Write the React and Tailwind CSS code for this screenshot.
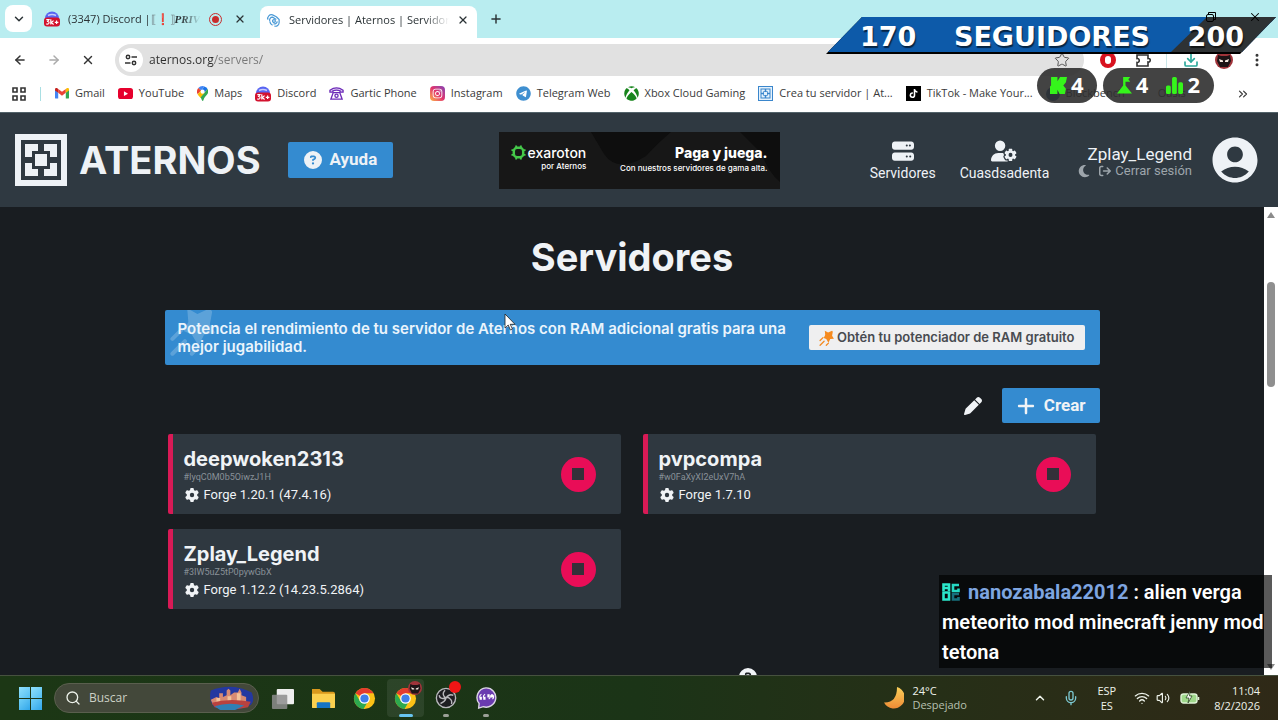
import React from 'react';
import {
    FaArrowRightFromBracket,
    FaCircleQuestion,
    FaGear,
    FaInstagram,
    FaMoon,
    FaPen,
    FaPlus,
    FaServer,
    FaTelegram,
    FaTiktok,
    FaUserGear,
    FaXbox,
} from 'react-icons/fa6';
import { MdAccountCircle } from 'react-icons/md';
import { ArrowLeft, ArrowRight, ChevronDown, ChevronUp, ChevronsRight, Download, EllipsisVertical, Mic, Plus, Search, Star, Volume2, Wifi, X } from 'lucide-react';

/* ---------- small drawings ---------- */

const DiscordBadge = () => (
    <svg viewBox="0 0 16 16" className="size-4 shrink-0">
        <circle cx="8" cy="7.5" r="7" fill="#5865f2" />
        <path d="M4 4.5q4-2 8 0" stroke="#c9cdfb" strokeWidth="1.4" fill="none" />
        <rect x="0" y="6.5" width="16" height="9" rx="3" fill="#d3122e" />
        <path d="M2.3 8.6h2.6L3.7 10.4q1.6.1 1.3 1.7-.5 1.4-2.7.8M6.8 8.3v5.2M9.6 9.6 7.2 11.5l2.4 2M10.8 11.3h3.6M12.6 9.5v3.6" stroke="#fff" strokeWidth="1.2" fill="none" />
    </svg>
);

const GmailIcon = () => (
    <svg viewBox="0 0 24 18" className="w-3.5 shrink-0">
        <path d="M0 2v14.5A1.5 1.5 0 0 0 1.500 18H5.500V8.300z" fill="#4285f4" />
        <path d="M24 2v14.500A1.500 1.500 0 0 1 22.500 18H18.500V8.300z" fill="#34a853" />
        <path d="M5.500 1.500 12 6.400l6.500-4.900v6.800L12 13.200 5.500 8.300z" fill="#ea4335" />
        <path d="M0 2.400C0 .2 2.300-.6 4 .5l1.500 1v6.800L0 4.200z" fill="#c5221f" />
        <path d="M24 2.400C24 .2 21.700-.6 20 .5l-1.500 1v6.800L24 4.200z" fill="#fbbc04" />
    </svg>
);

const YoutubeIcon = () => (
    <svg viewBox="0 0 16 12" className="w-[15px] shrink-0">
        <rect width="16" height="12" rx="3" fill="#e6002d" />
        <path d="M6.300 3.500v5L10.700 6z" fill="#fff" />
    </svg>
);

const MapsIcon = () => (
    <svg viewBox="0 0 12 16" className="h-[15px] shrink-0">
        <path d="M6 0a6 6 0 0 0-4.600 2.100L4.400 4.700 8 .4A6 6 0 0 0 6 0z" fill="#4285f4" />
        <path d="M1.400 2.100A6 6 0 0 0 .7 8.700L4.400 4.700z" fill="#ea4335" />
        <path d="M8 .4 4.400 4.700 7.700 7.400l3.600-4.200A6 6 0 0 0 8 .4z" fill="#1a73e8" />
        <path d="M.7 8.700C1.500 10.300 2.800 11.300 3.800 12.800L11.500 3.600 7.700 7.400 4.400 4.700z" fill="#fbbc04" />
        <path d="M11.300 3.200 3.800 12.300C4.900 13.600 5.200 16 6 16c.9 0 1-2.800 2.500-4.400S12 8.600 12 6c0-1-.3-2-.7-2.800z" fill="#34a853" />
        <circle cx="6" cy="6" r="2.200" fill="#fff" />
    </svg>
);

const PhoneIcon = () => (
    <svg viewBox="0 0 16 14" className="w-[15px] shrink-0" fill="none" stroke="#6d2bb8" strokeWidth="1.4">
        <path d="M1 5.500V3.500Q8-1.500 15 3.500v2h-3.200V4Q8 2.600 4.200 4v1.500z" fill="#e5d4f7" />
        <path d="M4.500 6h7l2.500 7H2z" />
        <circle cx="8" cy="9.300" r="1.700" />
    </svg>
);

const AternosMark = ({ className }) => (
    <svg viewBox="0 0 52 52" className={className} fill="currentColor">
        <path fillRule="evenodd" d="M0 0h52v52H0zM6 6v40h40V6z" />
        <path d="M10 10h13v7h-6v6h-7zM42 10H29v7h6v6h7zM10 42h13v-7h-6v-6h-7zM42 42H29v-7h6v-6h7zM20 20h12v12H20z" />
    </svg>
);

const AternosTile = () => (
    <span className="shrink-0 bg-[#3a86cc] text-[#e4f1fc]">
        <AternosMark className="m-px size-[13px]" />
    </span>
);

const SwirlIcon = () => (
    <svg viewBox="0 0 16 16" className="size-[15px] shrink-0" fill="none" stroke="#4b9ad6" strokeWidth="1.300">
        <path d="M2 7a4 4 0 0 1 5-5l4 2M4 8.500A3 3 0 0 1 7 4.500l4 2.500M7 13a5 5 0 0 1-3-4M9 14a4 4 0 0 0 5-4V7L11 4M8 11.500A3 3 0 0 0 12 9" />
        <circle cx="8.500" cy="8.500" r="1.500" />
    </svg>
);

const SiteInfoIcon = () => (
    <svg viewBox="0 0 14 14" className="size-3.5" fill="none" stroke="#333" strokeWidth="1.500">
        <circle cx="4" cy="4" r="1.700" />
        <path d="M7.500 4H13M1 10h5.500" />
        <circle cx="10" cy="10" r="1.700" />
    </svg>
);

const ShootingStar = ({ className }) => (
    <svg viewBox="0 0 44 44" className={className}>
        <path d="M16 2l9 5 11-5 2 3-2 11 5 8-10 1-5 10-6-10-7-3 4-8z" fill="currentColor" />
        <path d="M11 21 3 29M14 31 3 42M26 36l-6 6" stroke="currentColor" strokeWidth="3.500" strokeLinecap="round" />
    </svg>
);

const ExarotonMark = () => (
    <svg viewBox="0 0 16 16" className="size-[15px] shrink-0" fill="none" stroke="#45c94a">
        <rect x="3" y="3" width="10" height="10" rx="3.500" strokeWidth="2.600" />
        <path d="M5.500 .5v2M10.500 .5v2M5.500 13.500v2M10.500 13.500v2M.5 5.500h2M.5 10.500h2M13.500 5.500h2M13.500 10.500h2" strokeWidth="2" />
    </svg>
);

const ChromeIcon = () => (
    <svg viewBox="0 0 24 24" className="size-[23px]">
        <circle cx="12" cy="12" r="11" fill="#fbc116" />
        <path d="M12 12 2.500 6.500A11 11 0 0 1 21.500 6.500H12z" fill="#e33b2e" />
        <path d="M2.500 6.500A11 11 0 0 0 11 23l4.800-8.500L12 12l-4.800 2.700z" fill="#2da94f" />
        <circle cx="12" cy="12" r="5.500" fill="#fff" />
        <circle cx="12" cy="12" r="4.300" fill="#3f7ee8" />
    </svg>
);

const NinjaAvatar = ({ className }) => (
    <svg viewBox="0 0 18 18" className={className}>
        <circle cx="9" cy="9" r="9" fill="#a0343a" />
        <path d="M3 4l3 1h6l3-1 1 6-3 6H5l-3-6z" fill="#1d1416" />
        <path d="M4 8l4 1.500v1.500H5zM14 8l-4 1.500v1.500h3z" fill="#f4e9e0" />
    </svg>
);

const StreamFlask = () => (
    <svg viewBox="0 0 16 18" className="h-[17px]" fill="#35f51b">
        <path d="M6.500 0H14l-2 2.500 2 2.500H9v4l7 8.500H0L6.500 9z" />
    </svg>
);

const StreamBars = () => (
    <svg viewBox="0 0 16 16" className="size-[17px]" fill="#35f51b">
        <rect x="0" y="8" width="4.500" height="8" rx="1.500" />
        <rect x="5.700" y="0" width="4.500" height="16" rx="1.500" />
        <rect x="11.500" y="5" width="4.500" height="11" rx="1.500" />
    </svg>
);

const KickMark = () => (
    <svg viewBox="0 0 16 16" className="size-[17px]" fill="#35f51b">
        <path d="M1 0h6v4l2.500-4H16l-1 5-2.500 3 2.500 3-1 5H9l-2-4v4H0V9l1-1z" />
    </svg>
);

/* ---------- browser ---------- */

const TabStrip = () => (
    <div className="flex h-[38px] items-end bg-[#b9edf0] pl-[5px] text-[#2b3336]">
        <button aria-label="Buscar pestañas" className="mb-1.5 flex size-[27px] items-center justify-center rounded-lg bg-white">
            <ChevronDown className="size-3.5" strokeWidth={2.5} />
        </button>
        <div className="ml-3 flex h-full w-[216px] items-center gap-2 text-[11px]">
            <DiscordBadge />
            <span className="flex min-w-0 flex-1 overflow-hidden whitespace-nowrap [mask-image:linear-gradient(to_right,black_85%,transparent)]">
                (3347) Discord |
                <span className="text-[#6f7c80]">⟦</span>
                <span className="text-[#d92f4a]">❗</span>
                <span className="text-[#6f7c80]">⟧</span>
                <span className="font-[Liberation_Serif] font-bold italic">PRIV</span>
            </span>
            <span className="flex size-[13px] shrink-0 items-center justify-center rounded-full border border-[#c92c2c]">
                <span className="size-[7px] rounded-full bg-[#c92c2c]" />
            </span>
            <button aria-label="Cerrar pestaña" className="mr-3.5 ml-1">
                <X className="size-3" strokeWidth={2.5} />
            </button>
        </div>
        <div className="flex h-8 w-[217px] items-center gap-2 rounded-t-lg bg-white pr-2 pb-1 pl-1.5 text-[11px]">
            <SwirlIcon />
            <span className="min-w-0 flex-1 overflow-hidden whitespace-nowrap [mask-image:linear-gradient(to_right,black_85%,transparent)]">
                Servidores | Aternos | Servidor d
            </span>
            <button aria-label="Cerrar pestaña">
                <X className="size-3" strokeWidth={2.5} />
            </button>
        </div>
        <button aria-label="Nueva pestaña" className="mb-3 ml-3">
            <Plus className="size-3.5" strokeWidth={2.5} />
        </button>
        <div className="relative z-20 mb-3.5 ml-auto flex items-center gap-8 pr-4 text-black">
            <svg viewBox="0 0 10 10" className="size-2.5" fill="none" stroke="currentColor">
                <rect x=".5" y="2.500" width="7" height="7" rx="1.500" />
                <path d="M2.500 2.500V.5h7v7h-2" />
            </svg>
            <X className="size-3.5" strokeWidth={1.8} />
        </div>
    </div>
);

const Toolbar = () => (
    <div className="flex h-[43px] items-center bg-white px-[13px] text-[#333]">
        <button aria-label="Atrás"><ArrowLeft className="size-3.5" strokeWidth={2.5} /></button>
        <button aria-label="Adelante" className="ml-5 text-[#aaa]"><ArrowRight className="size-3.5" strokeWidth={2.5} /></button>
        <button aria-label="Detener" className="ml-5"><X className="size-3.5" strokeWidth={2.5} /></button>
        <div className="ml-5 flex h-8 flex-1 items-center rounded-full bg-[#e1e1e1] pr-3.5 pl-1">
            <span className="flex size-6 items-center justify-center rounded-full bg-white"><SiteInfoIcon /></span>
            <input
                aria-label="Dirección"
                defaultValue="aternos.org/servers/"
                className="ml-1.5 min-w-0 flex-1 bg-linear-to-r from-[#2c2c2c] from-[65px] to-[#777] to-[65px] bg-clip-text text-xs text-transparent outline-none"
            />
            <Star className="size-4 text-[#555]" strokeWidth={1.5} />
        </div>
        <span className="ml-4 flex size-4 items-center justify-center rounded-full bg-[#d8121f]">
            <span className="h-2 w-1.5 rounded-full bg-white" />
        </span>
        <svg viewBox="0 0 16 16" className="ml-5 size-4" fill="none" stroke="#333" strokeWidth="1.600">
            <path d="M1 3h11v3.500c3-.5 3 4 0 3.500V14H1v-3.500c3 .5 3-4.500 0-4z" />
        </svg>
        <span className="ml-3.5 h-4 w-px bg-[#c9e6e8]" />
        <Download className="ml-4 size-4 text-[#2ba89b]" strokeWidth={2.5} />
        <NinjaAvatar className="ml-4 size-[18px]" />
        <EllipsisVertical className="ml-4 size-4" strokeWidth={2.5} />
    </div>
);

const BOOKMARKS = [
    { label: 'Gmail', icon: <GmailIcon /> },
    { label: 'YouTube', icon: <YoutubeIcon /> },
    { label: 'Maps', icon: <MapsIcon /> },
    { label: 'Discord', icon: <DiscordBadge /> },
    { label: 'Gartic Phone', icon: <PhoneIcon /> },
    {
        label: 'Instagram',
        icon: <FaInstagram className="size-[15px] shrink-0 rounded bg-linear-to-tr from-[#fbb034] via-[#e1306c] to-[#833ab4] p-0.5 text-white" />,
    },
    { label: 'Telegram Web', icon: <FaTelegram className="size-[15px] shrink-0 text-[#3f8fd0]" /> },
    { label: 'Xbox Cloud Gaming', icon: <FaXbox className="size-[15px] shrink-0 text-[#17851c]" /> },
    { label: 'Crea tu servidor | At...', icon: <AternosTile /> },
    { label: 'TikTok - Make Your...', icon: <FaTiktok className="size-[15px] shrink-0 bg-black p-[3px] text-white" /> },
    { label: 'Blockbench', icon: <span className="size-3.5 shrink-0 rounded-full bg-[#1c4f93]" /> },
    { label: 'Oasis', icon: <span className="size-3.5 shrink-0" /> },
];

const BookmarksBar = () => (
    <nav className="flex h-8 items-center border-b border-[#53636a] bg-white pr-7 pb-1.5 pl-3 text-[11px] text-[#3a3a3a]">
        <svg viewBox="0 0 14 14" className="size-3.5 shrink-0" fill="none" stroke="#333" strokeWidth="1.600">
            <path d="M1 1h4v4H1zM9 1h4v4H9zM1 9h4v4H1zM9 9h4v4H9z" />
        </svg>
        <span className="mr-3.5 ml-3.5 h-3.5 w-px bg-[#a9dfe3]" />
        <div className="flex min-w-0 flex-1 gap-[13px] overflow-hidden">
            {BOOKMARKS.map(({ label, icon }) => (
                <a key={label} href="#" className="flex shrink-0 items-center gap-1.5 whitespace-nowrap">
                    {icon}
                    {label}
                </a>
            ))}
        </div>
        <ChevronsRight className="size-3.5 shrink-0" />
    </nav>
);

/* ---------- site ---------- */

const AdBanner = () => (
    <a href="#" className="relative flex h-[57px] w-[281px] justify-between overflow-hidden bg-[#171717] px-3 pt-3 font-[Inter] text-white">
        <svg viewBox="0 0 281 57" className="absolute inset-0" fill="#0e0e0e">
            <path d="M92 0h80q-12 10-25 24-28 18-42-2zM241 0h40v50q-12-10-18-28z" />
        </svg>
        <span className="relative flex flex-col items-end">
            <span className="flex items-center gap-0.5 text-sm leading-[18px] font-medium"><ExarotonMark />exaroton</span>
            <span className="text-[8px] leading-2 font-medium">por Aternos</span>
        </span>
        <span className="relative flex flex-col items-end">
            <span className="text-sm leading-[18px] font-extrabold">Paga y juega.</span>
            <span className="text-[8px] leading-3 font-medium">Con nuestros servidores de gama alta.</span>
        </span>
    </a>
);

const SiteHeader = () => (
    <header className="grid h-[94px] shrink-0 grid-cols-[1fr_auto_1fr] items-center bg-[#2f3941] px-[15px] text-[#eef2f6]">
        <div className="flex items-center">
            <AternosMark className="size-[52px]" />
            <span className="ml-3 font-[Inter] text-[38px] leading-none font-bold">ATERNOS</span>
            <button className="ml-[27px] flex h-9 items-center gap-2 rounded-xs bg-[#348bd0] px-4 text-[17px] font-bold">
                <FaCircleQuestion className="size-[18px]" />
                Ayuda
            </button>
        </div>
        <AdBanner />
        <div className="flex items-center justify-end pr-[5px]">
            <a href="#" className="flex flex-col items-center pt-1 text-sm leading-[22px]">
                <FaServer className="size-[22px]" />
                Servidores
            </a>
            <a href="#" className="ml-6 flex flex-col items-center pt-1 text-sm leading-[22px]">
                <FaUserGear className="h-[22px] w-[26px]" />
                Cuasdsadenta
            </a>
            <div className="ml-7 flex flex-col items-end pt-1">
                <span className="text-[17px] leading-[18px]">Zplay_Legend</span>
                <span className="flex items-center text-[13px] leading-4 text-[#9da5ab]">
                    <FaMoon className="mr-2 size-3.5" />
                    <a href="#" className="flex items-center gap-1">
                        <FaArrowRightFromBracket className="size-3" />
                        Cerrar sesión
                    </a>
                </span>
            </div>
            <MdAccountCircle className="-mr-1 ml-4 size-[54px]" />
        </div>
    </header>
);

const SERVERS = [
    { name: 'deepwoken2313', id: '#IyqC0M0b5OiwzJ1H', software: 'Forge 1.20.1 (47.4.16)' },
    { name: 'pvpcompa', id: '#w0FaXyXI2eUxV7hA', software: 'Forge 1.7.10' },
    { name: 'Zplay_Legend', id: '#3IW5uZ5tP0pywGbX', software: 'Forge 1.12.2 (14.23.5.2864)' },
];

const ServerCard = ({ name, id, software }) => (
    <article className="flex h-20 items-center justify-between rounded-xs border-l-[5px] border-[#d81a56] bg-[#2f3840] pr-[25px] pl-[11px] text-[#f0f3f6]">
        <div className="pt-1">
            <h2 className="font-[Inter] text-xl leading-6 font-bold">{name}</h2>
            <p className="text-[9px] leading-3 text-[#899198]">{id}</p>
            <p className="mt-0.5 flex items-center gap-1 text-[13px] leading-5">
                <FaGear className="mx-px size-3.5" />
                {software}
            </p>
        </div>
        <button aria-label={`Estado de ${name}`} className="flex size-[35px] items-center justify-center rounded-full bg-[#e90d57]">
            <span className="size-3 bg-[#343039]" />
        </button>
    </article>
);

const BoostNotice = () => (
    <section className="relative flex h-[55px] items-center justify-between overflow-hidden rounded-xs bg-[#348bd0] pr-[15px] pl-[13px] font-[Inter] text-[#eaf4fc]">
        <ShootingStar className="absolute -top-1 left-1 size-[50px] text-white/20" />
        <p className="relative max-w-[610px] text-[15px] leading-[18px] font-semibold">
            Potencia el rendimiento de tu servidor de Aternos con RAM adicional gratis para una mejor jugabilidad.
        </p>
        <button className="flex h-[25px] items-center gap-0.5 rounded-xs bg-[#efeff0] px-2.5 text-[13px] font-semibold whitespace-nowrap text-[#484b50]">
            <ShootingStar className="size-4 text-[#f58a1f]" />
            Obtén tu potenciador de RAM gratuito
        </button>
    </section>
);

const ServersPage = () => (
    <main className="flex min-w-0 flex-1 flex-col items-center overflow-hidden bg-[#191d21] pt-[30px] text-[#f0f3f6]">
        <h1 className="font-[Inter] text-[38px] leading-10 font-bold">Servidores</h1>
        <div className="mt-[33px] w-full max-w-[935px]">
            <BoostNotice />
            <div className="mt-[23px] flex items-center justify-end gap-5">
                <button aria-label="Editar"><FaPen className="size-[18px]" /></button>
                <button className="flex h-[35px] items-center gap-2 rounded-xs bg-[#348bd0] px-3.5 text-[17px] font-bold">
                    <FaPlus className="size-5" />
                    Crear
                </button>
            </div>
            <div className="mt-[11px] mr-1 ml-[3px] grid grid-cols-2 gap-x-[22px] gap-y-[15px]">
                {SERVERS.map((server) => <ServerCard key={server.id} {...server} />)}
            </div>
        </div>
        <div className="mt-[59px] pl-[232px]">
            <FaCircleQuestion className="size-[18px]" />
        </div>
    </main>
);

const ScrollRail = () => (
    <div className="flex w-3.5 shrink-0 flex-col items-center bg-white py-1 text-[#8b8b8b]">
        <svg viewBox="0 0 8 8" className="size-2" fill="currentColor"><path d="M4 1l4 6H0z" /></svg>
        <span className="mt-[63px] h-[105px] w-2 rounded-full bg-[#8f8f8f]" />
        <svg viewBox="0 0 8 8" className="mt-auto size-2" fill="currentColor"><path d="M0 1h8L4 7z" /></svg>
    </div>
);

/* ---------- taskbar ---------- */

const Taskbar = () => (
    <footer className="flex h-[45px] shrink-0 items-center border-t border-[#46513f] bg-linear-to-r from-[#1c3715] via-[#1b3417] to-[#2f2917] pr-[18px] pl-[19px] font-[Open_Sans] text-[11px] text-[#edf2ea]">
        <button aria-label="Inicio" className="grid size-[23px] grid-cols-2 gap-px">
            <span className="bg-linear-to-br from-[#8fe0fb] to-[#52bff2]" />
            <span className="bg-linear-to-br from-[#8fe0fb] to-[#52bff2]" />
            <span className="bg-linear-to-br from-[#6fd0f7] to-[#2ea6ea]" />
            <span className="bg-linear-to-br from-[#6fd0f7] to-[#2ea6ea]" />
        </button>
        <label className="ml-3 flex h-[30px] w-[205px] items-center gap-2 overflow-hidden rounded-full border border-[#5a5f4e] bg-[#43483a] pl-2.5">
            <Search className="size-4 shrink-0" />
            <input type="text" placeholder="Buscar" aria-label="Buscar" className="min-w-0 flex-1 bg-transparent text-xs outline-none placeholder:text-[#ccd1c5]" />
            <svg viewBox="0 0 48 28" className="mr-1 h-[26px] shrink-0">
                <path d="M2 6Q24-3 46 8q4 10-2 14-18 8-38 2Q-1 16 2 6z" fill="#2438a0" />
                <path d="M2 16l6-3 3 1V9h4v4l4-2V6l2-2 2 2v5l4-3h4l2-4 2 4v3l5 2v8H4z" fill="#d88a72" />
                <path d="M8 14h4v5H8zM20 12h4v6h-4zM30 9h4v9h-4z" fill="#f2c29a" />
                <path d="M3 19q18-5 42-1l-3 6Q20 29 6 24z" fill="#b8423f" />
                <path d="M6 23q14-5 32-1l-10 5H12z" fill="#2f7fb5" />
            </svg>
        </label>
        <div className="ml-3 flex items-center gap-[18px]">
            <svg viewBox="0 0 24 24" className="size-[23px]">
                <rect x="6" y="2" width="18" height="16" rx="1" fill="#eee" />
                <rect x="1" y="8" width="16" height="15" rx="1" fill="#8d8d8d" fillOpacity=".85" />
            </svg>
            <svg viewBox="0 0 24 24" className="size-[23px]">
                <path d="M0 2h8l3 3h11q2 0 2 2v14H0z" fill="#d9991d" />
                <path d="M0 7h24v14q0 1-1 1H1q-1 0-1-1z" fill="#fbd04f" />
                <path d="M5 22v-5q0-1 1-1h12q1 0 1 1v5z" fill="#1674c4" />
            </svg>
            <ChromeIcon />
            <span className="relative -mx-[7px] flex h-[38px] w-[37px] items-center justify-center rounded bg-white/8">
                <ChromeIcon />
                <NinjaAvatar className="absolute top-0.5 right-0.5 size-3.5" />
                <span className="absolute bottom-0 h-[3px] w-3.5 rounded-full bg-[#68c5f0]" />
            </span>
            <span className="relative flex h-[38px] items-center">
                <svg viewBox="0 0 24 24" className="size-[22px]" fill="none">
                    <circle cx="12" cy="12" r="10.500" fill="#1e1e22" stroke="#b9b9bd" strokeWidth="1.500" />
                    <path d="M11 3.500q-4 4 0 8 3-1 5 1 3 2 2 6M20 9q-5-2-8 3-1 4-6 6M4.500 9q1 5 7 3" stroke="#b9b9bd" strokeWidth="1.500" />
                </svg>
                <span className="absolute top-0.5 -right-1 size-3 rounded-full bg-[#f01515]" />
                <span className="absolute bottom-0 left-2 h-[3px] w-1.5 rounded-full bg-[#9ba097]" />
            </span>
            <span className="relative flex h-[38px] items-center">
                <svg viewBox="0 0 24 24" className="size-[22px]">
                    <path d="M12 1a10.500 10.500 0 1 1-3 20.500L4 23l.5-5A10.500 10.500 0 0 1 12 1z" fill="#6a3bb0" stroke="#dcd6e6" strokeWidth="1.500" />
                    <path d="M7 8q-2 1-2 3.500M11 8q-2 1-2 3.500M15 13q2-1 2-4M19 13q2-1 1-4" stroke="#fff" strokeWidth="1.200" fill="none" />
                    <path d="M5 10.500h2.500V14H5zM9 10.500h2.500V14H9zM13.500 8H16v3.500h-2.500zM17.300 8h2.500v3.500h-2.500z" fill="#fff" />
                </svg>
                <span className="absolute bottom-0 left-2 h-[3px] w-1.5 rounded-full bg-[#9ba097]" />
            </span>
        </div>
        <div className="ml-auto flex items-center">
            <div className="flex w-[149px] items-center gap-2 leading-[14px]">
                <svg viewBox="0 0 20 22" className="w-5">
                    <defs>
                        <linearGradient id="moon" x1="0" y1="0" x2="0" y2="1">
                            <stop offset="0" stopColor="#f9cf5a" />
                            <stop offset="1" stopColor="#ee8b35" />
                        </linearGradient>
                    </defs>
                    <path d="M13 0a11 11 0 1 1-13 15.500Q13 16 13 0z" fill="url(#moon)" />
                </svg>
                <span>24°C<br /><span className="text-[#b6c0b0]">Despejado</span></span>
            </div>
            <ChevronUp className="size-3.5" strokeWidth={2.5} />
            <Mic className="ml-4 size-4 text-[#7cc7cf]" />
            <span className="ml-[18px] text-center leading-[15px]">ESP<br />ES</span>
            <Wifi className="ml-[18px] size-4" />
            <Volume2 className="ml-1.5 size-3.5" />
            <svg viewBox="0 0 20 14" className="ml-2.5 w-5" fill="none">
                <rect x="1" y="3" width="16" height="9" rx="2.500" fill="#9fd88b" stroke="#dff3d7" strokeWidth="1.400" />
                <path d="M18.500 6v3" stroke="#dff3d7" strokeWidth="1.600" />
                <path d="M10 0 6 7h3l-1 5 4-7H9.500z" fill="#fff" stroke="#1c3715" strokeWidth=".7" />
            </svg>
            <span className="ml-3.5 text-right leading-[15px]">11:04<br />8/2/2026</span>
        </div>
    </footer>
);

/* ---------- stream overlays ---------- */

const FollowerGoal = () => (
    <div className="absolute top-[17px] right-0.5 z-10 h-[37px] w-[450px] bg-black [clip-path:polygon(36px_0,100%_0,414px_100%,0_100%)]">
        <div className="relative flex h-[35px] items-center justify-between bg-[#0d5aa9] pt-1 pr-8 pl-[34px] font-['DejaVu_Sans'] text-[27px] leading-none font-bold text-white [text-shadow:1px_2px_1px_rgba(0,0,0,0.6)]">
            <div className="absolute inset-y-0 right-0 w-[105px] bg-[#2e3234] [clip-path:polygon(36px_0,100%_0,100%_100%,0_100%)]" />
            <span className="relative">170</span>
            <span className="relative">SEGUIDORES</span>
            <span className="relative">200</span>
        </div>
    </div>
);

const StreamStats = () => (
    <div className="absolute top-[68px] right-16 z-10 flex gap-1.5 font-['Noto_Sans'] text-[22px] leading-[30px] font-bold text-white">
        <div className="flex h-[35px] items-center gap-1 rounded-full bg-[#2f2f2f]/90 px-[13px]">
            <KickMark />
            <span className="pb-1">4</span>
        </div>
        <div className="flex h-[35px] items-center gap-1 rounded-full bg-[#2f2f2f]/90 px-[14px]">
            <StreamFlask />
            <span className="mr-3.5 pb-1">4</span>
            <StreamBars />
            <span className="pb-1">2</span>
        </div>
    </div>
);

const ChatMessage = () => (
    <div className="absolute right-1.5 bottom-[52px] z-10 w-[333px] bg-black/65 px-[3px] pt-0.5 pb-px font-[Roboto] text-xl leading-[30px] font-semibold text-white">
        <svg viewBox="0 0 18 18" className="mr-2 inline size-[18px] align-[-2px]" fill="none" strokeWidth="2.600">
            <path d="M1.500 8V1.500H7V8M1.500 5H7M1.500 9.500v7H7v-7z" stroke="#2be8cb" />
            <path d="M17 2h-6v6h5.500V5.500" stroke="#25d9c4" />
            <path d="M17 11h-6v5.500h5.500V14" stroke="#17707e" />
        </svg>
        <span className="font-bold text-[#7ea5e0]">nanozabala22012</span> : alien verga meteorito mod minecraft jenny mod tetona
    </div>
);

const PointerCursor = () => (
    <svg viewBox="0 0 12 18" className="absolute top-[313px] left-[504px] z-10 h-[18px]" fill="#fff" stroke="#222" strokeWidth=".8">
        <path d="M1 1v14l3.200-3 2.200 5 2-1-2.200-4.700H11z" />
    </svg>
);

const App = () => (
    <div className="relative flex h-screen flex-col overflow-hidden bg-[#191d21] font-[Open_Sans]">
        <TabStrip />
        <Toolbar />
        <BookmarksBar />
        <div className="flex min-h-0 flex-1 flex-col font-[Roboto]">
            <SiteHeader />
            <div className="flex min-h-0 flex-1">
                <ServersPage />
                <ScrollRail />
            </div>
        </div>
        <Taskbar />
        <FollowerGoal />
        <StreamStats />
        <ChatMessage />
        <PointerCursor />
    </div>
);

export default App;
